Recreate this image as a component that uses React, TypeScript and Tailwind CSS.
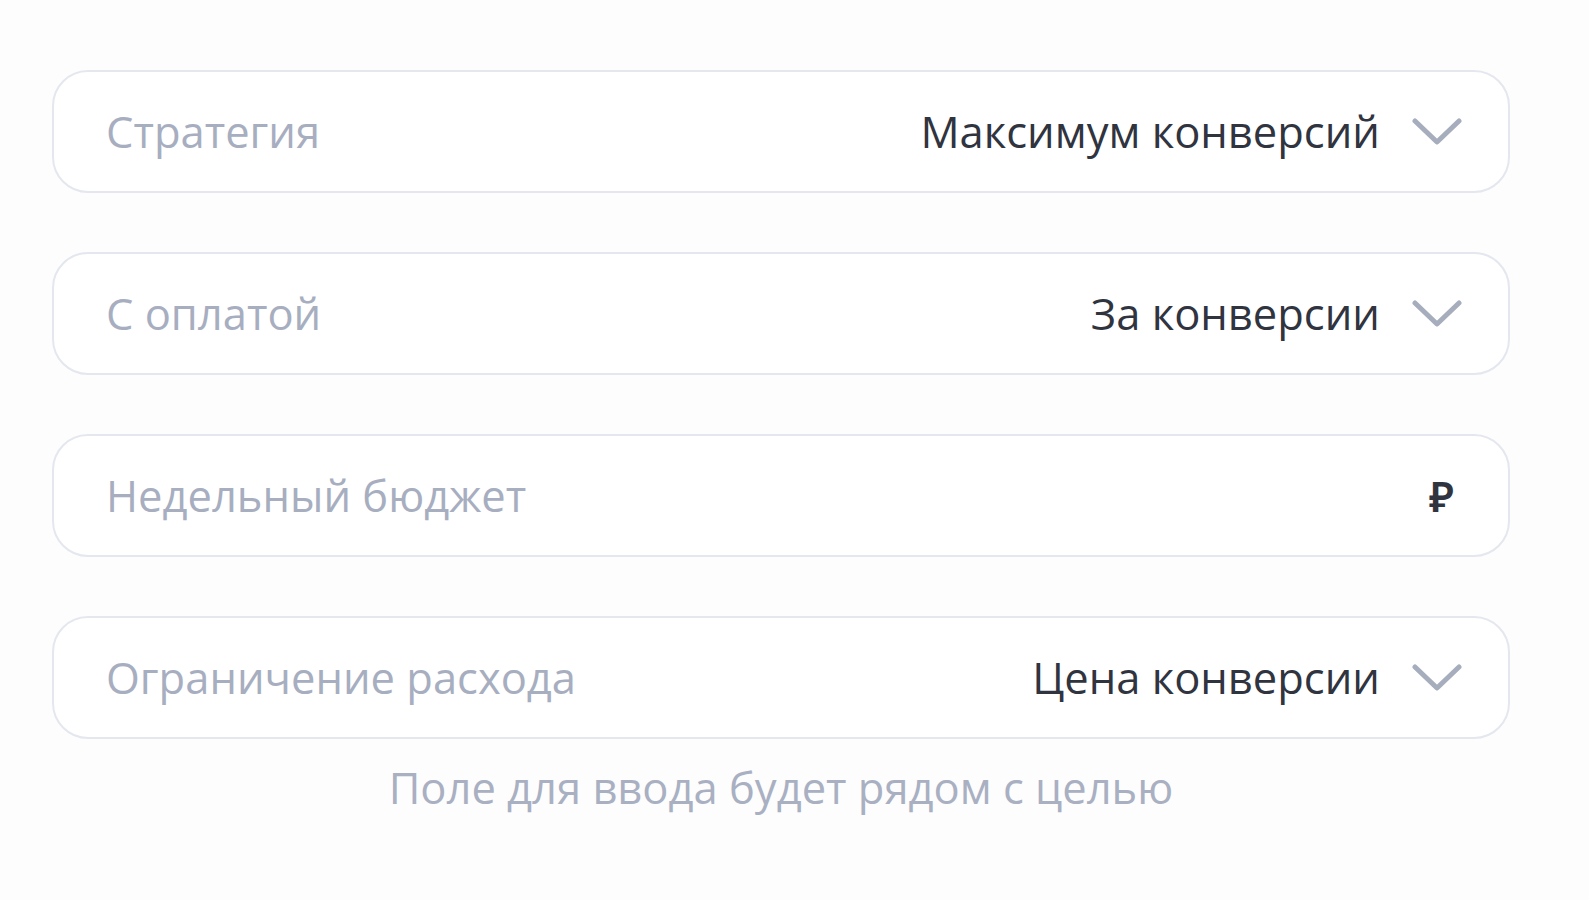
import React from "react";

function Chevron() {
  return (
    <svg width="50" height="30" viewBox="0 0 50 30" fill="none" className="shrink-0">
      <path
        d="M3 4 L25 25 L47 4"
        stroke="#a6adbd"
        strokeWidth="5"
        strokeLinecap="round"
        strokeLinejoin="round"
      />
    </svg>
  );
}

function Field({ label, value, ruble }: { label: string; value?: string; ruble?: boolean }) {
  return (
    <div className="flex h-[123px] items-center justify-between rounded-[36px] border-2 border-[#e5e7ef] bg-white pl-[52px] pr-[46px]">
      <span className="text-[43.5px] text-[#a7aec0]">{label}</span>
      {ruble ? (
        <span className="pr-[8px] text-[42px] font-semibold text-[#2f3440]">₽</span>
      ) : (
        <div className="flex items-center gap-[32px]">
          <span className="text-[43.5px] font-medium text-[#30343f]">{value}</span>
          <Chevron />
        </div>
      )}
    </div>
  );
}

export default function App() {
  return (
    <div
      className="min-h-screen bg-[#fdfdfe] pt-[70px]"
      style={{ fontFamily: '"Open Sans", "Noto Sans", sans-serif' }}
    >
      <div className="ml-[52px] flex w-[1458px] flex-col gap-[59px]">
        <Field label="Стратегия" value="Максимум конверсий" />
        <Field label="С оплатой" value="За конверсии" />
        <Field label="Недельный бюджет" ruble />
        <div className="flex flex-col">
          <Field label="Ограничение расхода" value="Цена конверсии" />
          <p className="mt-[16px] text-center text-[43.5px] text-[#a9b0c2]">
            Поле для ввода будет рядом с целью
          </p>
        </div>
      </div>
    </div>
  );
}
